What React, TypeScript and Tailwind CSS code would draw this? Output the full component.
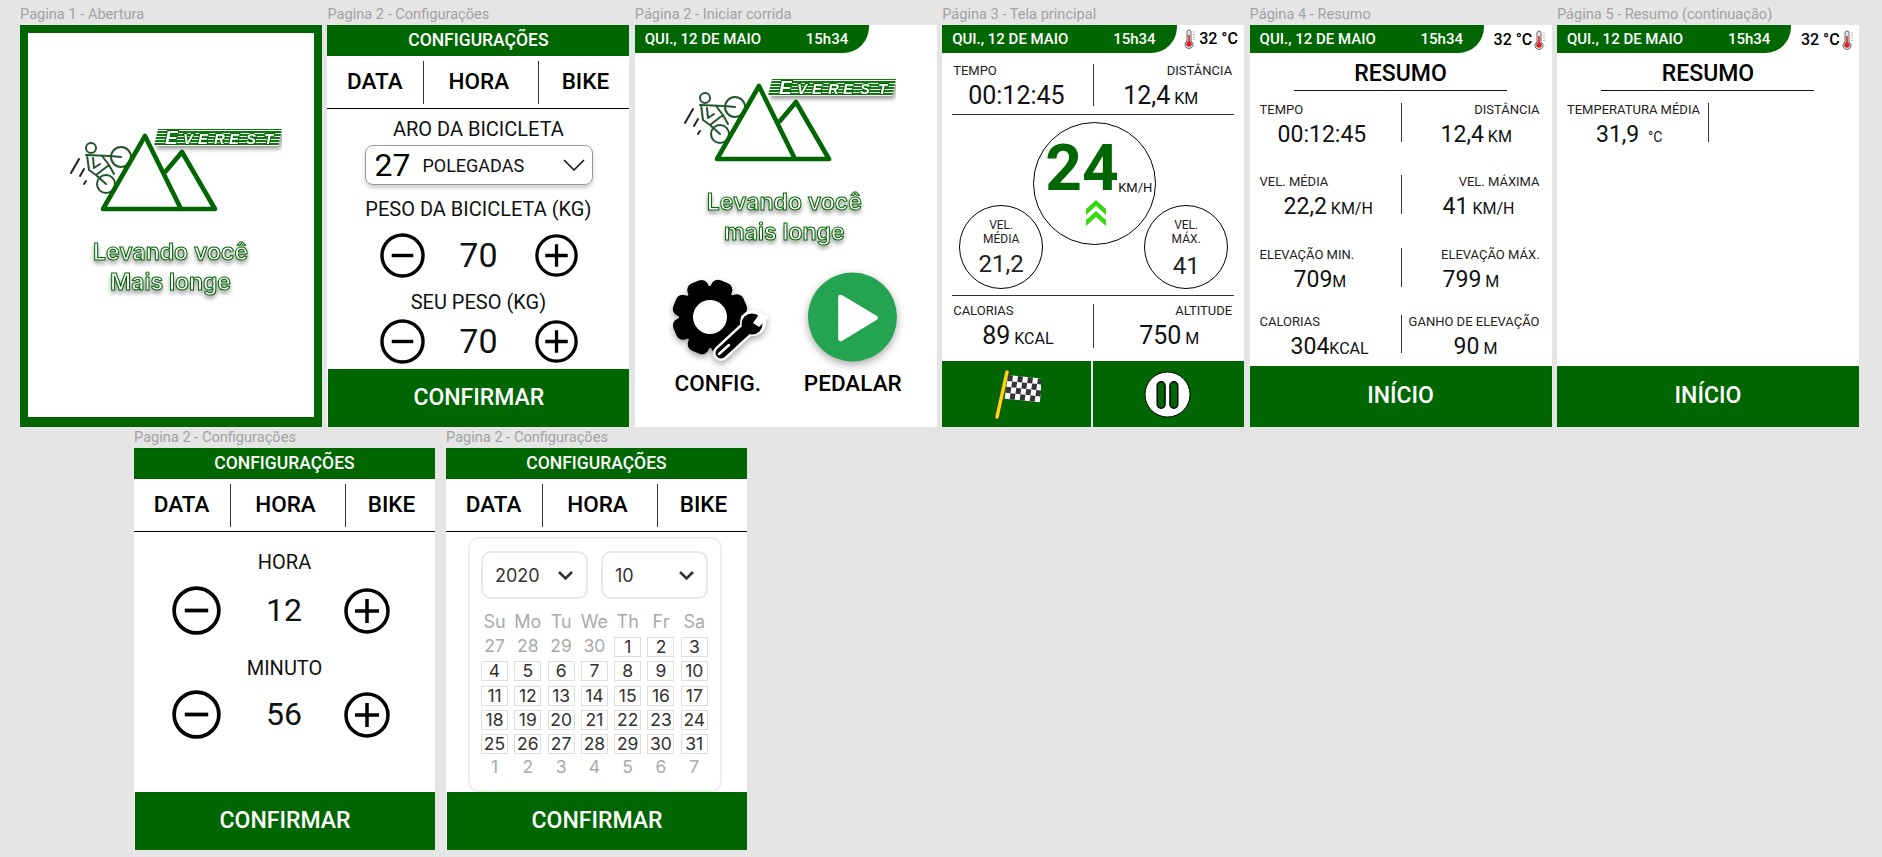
import React from "react";

const green = "#006600";

function Logo() {
  return (
    <svg viewBox="0 0 212 84" className="w-[212px] h-[84px] block">
      <defs>
        <pattern id="stripes" width="4" height="3" patternUnits="userSpaceOnUse">
          <rect width="4" height="3" fill="#ffffff" />
          <rect width="4" height="2" fill="#0a7a0a" />
        </pattern>
        <filter id="soft" x="-10%" y="-30%" width="120%" height="190%">
          <feDropShadow dx="2" dy="3" stdDeviation="2" floodColor="#000" floodOpacity="0.4" />
        </filter>
      </defs>
      <g fill="none" stroke="#25552f" strokeWidth="2" strokeLinecap="round" strokeLinejoin="round">
        <circle cx="21" cy="20" r="5" />
        <circle cx="51" cy="29" r="10" />
        <circle cx="36" cy="56" r="9" />
        <path d="M16 27 L40 28 L51 29 M17 27 L19 42 L26 47 L39 37 L32 28 M23 30 L24 40 L30 36 M26 47 L36 56 M39 37 L44 46" />
      </g>
      <g stroke="#222" strokeWidth="2" strokeLinecap="round">
        <path d="M9 31 L1 45" />
        <path d="M14 41 L10 48" />
        <path d="M16 53 L14 56" />
      </g>
      <path
        d="M33 81 L75 8 L111 81 Z M96 43 L112 24 L145 81 L111 81"
        fill="none"
        stroke={green}
        strokeWidth="4.6"
        strokeLinejoin="round"
        strokeLinecap="round"
      />
      <g filter="url(#soft)">
        <polygon points="88,1 212,1 208,18 84,18" fill="url(#stripes)" />
        <text
          x="95 113 128 144 159 176 194"
          y="15.5"
          fontFamily="Liberation Sans"
          fontWeight="700"
          fontStyle="italic"
          fontSize="15"
          fill="#fff"
          stroke={green}
          strokeWidth="2"
          paintOrder="stroke"
        >
          <tspan fontSize="19">E</tspan>VEREST
        </text>
      </g>
    </svg>
  );
}

function Tagline({ second }: { second: string }) {
  return (
    <div className="text-center [font-family:Inter,sans-serif] font-semibold text-[23px] leading-[30px] text-white [-webkit-text-stroke:1px_#006600] drop-shadow-[0_3px_2px_rgba(0,0,0,0.4)]">
      <div>Levando você</div>
      <div>{second}</div>
    </div>
  );
}

function Minus({ className }: { className: string }) {
  return (
    <svg viewBox="0 0 46 46" className={className}>
      <circle cx="23" cy="23" r="21" fill="none" stroke="#000" strokeWidth="3.5" />
      <path d="M12 23 H34" stroke="#000" strokeWidth="3.5" />
    </svg>
  );
}

function Plus({ className }: { className: string }) {
  return (
    <svg viewBox="0 0 46 46" className={className}>
      <circle cx="23" cy="23" r="21" fill="none" stroke="#000" strokeWidth="3.5" />
      <path d="M11 23 H35 M23 11 V35" stroke="#000" strokeWidth="3.5" />
    </svg>
  );
}

function ConfigHeader() {
  return (
    <>
      <div className="h-[31px] bg-[#006600] text-white text-[17.5px] font-medium flex items-center justify-center shrink-0">
        CONFIGURAÇÕES
      </div>
      <div className="h-[53px] border-b border-black flex items-center shrink-0 text-[22.5px] font-medium text-black">
        <div className="w-[96px] text-center pr-[1px]">DATA</div>
        <div className="w-[116px] h-[43px] border-x border-[#333] flex items-center justify-center pr-[5px]">HORA</div>
        <div className="flex-1 text-center pl-[2px]">BIKE</div>
      </div>
    </>
  );
}

function BottomButton({ text, className }: { text: string; className: string }) {
  return (
    <div className={`${className} mt-auto bg-[#006600] text-white text-[23px] font-medium flex items-center justify-center shrink-0`}>
      {text}
    </div>
  );
}

function DateBar({ width }: { width: string }) {
  return (
    <div className={`${width} h-[28px] bg-[#006600] rounded-br-[26px] text-white text-[15px] font-medium flex items-center pl-[10px] shrink-0`}>
      <span className="w-[161px]">QUI., 12 DE MAIO</span>
      <span>15h34</span>
    </div>
  );
}

function Thermometer() {
  return (
    <svg viewBox="0 0 12 20" className="w-[12px] h-[20px] shrink-0">
      <path d="M3 3 a2 2 0 0 1 4 0 V12 a4 4 0 1 1 -4 0 Z" fill="#e8e8e8" stroke="#666" strokeWidth="1" />
      <rect x="4.2" y="6" width="1.6" height="8" fill="#d9232e" />
      <circle cx="5" cy="15" r="2.8" fill="#d9232e" />
      <path d="M9 3 H11 M9 5.5 H11 M9 8 H11 M9 10.5 H11" stroke="#999" strokeWidth="0.7" />
    </svg>
  );
}

function Stat({
  label,
  value,
  unit,
  right,
  pad,
  size = "text-[25px]",
}: {
  label: string;
  value: string;
  unit?: string;
  right?: boolean;
  pad: string;
  size?: string;
}) {
  return (
    <div>
      <div className={`text-[13px] leading-[14px] text-[#222] ${right ? "text-right" : ""}`}>{label}</div>
      <div className={`${pad} mt-[5px] leading-[26px] whitespace-nowrap text-[#111] ${size}`}>
        {value}
        {unit && <span className="text-[16px]">{unit}</span>}
      </div>
    </div>
  );
}

function StatRow({
  left,
  right,
  className,
  inset = "pl-[10px]",
}: {
  left: React.ReactNode;
  right: React.ReactNode;
  className: string;
  inset?: string;
}) {
  return (
    <div className={`flex ${className}`}>
      <div className={`w-[152px] h-full border-r border-[#333] ${inset}`}>{left}</div>
      <div className="flex-1 pr-[12px]">{right}</div>
    </div>
  );
}

function Abertura() {
  return (
    <div className="w-[302px] h-[402px] bg-white border-x-[8px] border-t-[8px] border-b-[10px] border-[#006600]">
      <div className="ml-[42px] mt-[95px]">
        <Logo />
      </div>
      <div className="mt-[25px] mr-[1px]">
        <Tagline second="Mais longe" />
      </div>
    </div>
  );
}

function ConfigBike() {
  return (
    <div className="w-[302px] h-[402px] bg-white flex flex-col">
      <ConfigHeader />
      <div className="mt-[8px] text-center text-[20px] leading-[24px] text-[#111]">ARO DA BICICLETA</div>
      <div className="mt-[4px] ml-[38px] w-[228px] h-[40px] rounded-[8px] border border-[#999] shadow-[0_3px_4px_rgba(0,0,0,0.2)] flex items-center pl-[8px]">
        <span className="text-[32px] leading-[38px] w-[48px]">27</span>
        <span className="text-[18px] text-[#111]">POLEGADAS</span>
        <svg viewBox="0 0 22 12" className="w-[22px] h-[12px] ml-[39px]">
          <path d="M1 1 L11 11 L21 1" fill="none" stroke="#111" strokeWidth="1.5" />
        </svg>
      </div>
      <div className="mt-[12px] text-center text-[20px] leading-[24px] text-[#111]">PESO DA BICICLETA (KG)</div>
      <div className="mt-[12px] pl-[53px] flex items-center">
        <Minus className="w-[45px] h-[45px]" />
        <span className="w-[106px] text-center text-[34px] leading-[45px] text-[#111]">70</span>
        <Plus className="ml-[4px] w-[43px] h-[43px]" />
      </div>
      <div className="mt-[12px] text-center text-[20px] leading-[24px] text-[#111]">SEU PESO (KG)</div>
      <div className="mt-[5px] pl-[53px] flex items-center">
        <Minus className="w-[45px] h-[45px]" />
        <span className="w-[106px] text-center text-[34px] leading-[45px] text-[#111]">70</span>
        <Plus className="ml-[4px] w-[43px] h-[43px]" />
      </div>
      <BottomButton text="CONFIRMAR" className="h-[58px] ml-[1px]" />
    </div>
  );
}

const gearTeeth = [0, 45, 90, 135, 180, 225, 270, 315];

function GearIcon() {
  return (
    <svg viewBox="0 0 110 100" className="w-[110px] h-[100px] drop-shadow-[0_3px_3px_rgba(0,0,0,0.35)]">
      {gearTeeth.map((deg) => (
        <rect key={deg} x="36" y="14" width="22" height="18" rx="7" fill="#000" transform={`rotate(${deg + 22} 47 52)`} />
      ))}
      <circle cx="47" cy="52" r="31" fill="#000" />
      <circle cx="47" cy="52" r="17" fill="#fff" />
      <path d="M58 88 L86 62" stroke="#fff" strokeWidth="16" strokeLinecap="round" />
      <circle cx="90" cy="58" r="13" fill="#fff" />
      <path d="M58 88 L84 64" stroke="#000" strokeWidth="11" strokeLinecap="round" />
      <circle cx="89" cy="59" r="10.5" fill="#000" />
      <path d="M90 58 L97 48 L106 52 L96 62 Z" fill="#fff" />
      <path d="M56 89 L66 80" stroke="#fff" strokeWidth="2.5" strokeLinecap="round" />
    </svg>
  );
}

function IniciarCorrida() {
  return (
    <div className="w-[302px] h-[402px] bg-white flex flex-col">
      <DateBar width="w-[234px]" />
      <div className="ml-[49px] mt-[25px]">
        <Logo />
      </div>
      <div className="mt-[25px] mr-[3px]">
        <Tagline second="mais longe" />
      </div>
      <div className="mt-[18px] flex">
        <div className="w-[166px] flex flex-col items-center">
          <div className="h-[104px]">
            <GearIcon />
          </div>
          <div className="text-[22.5px] font-medium leading-[28px] text-black">CONFIG.</div>
        </div>
        <div className="w-[104px] flex flex-col items-center">
          <div className="h-[104px] pt-[7px]">
            <svg viewBox="0 0 90 90" className="w-[89px] h-[90px] drop-shadow-[0_3px_4px_rgba(0,0,0,0.35)]">
              <circle cx="45" cy="45" r="45" fill="#24A350" />
              <path d="M33 25 L68 46 L33 67 Z" fill="#fff" stroke="#fff" strokeWidth="5" strokeLinejoin="round" />
            </svg>
          </div>
          <div className="text-[22.5px] font-medium leading-[28px] text-black">PEDALAR</div>
        </div>
      </div>
    </div>
  );
}

const flagCells = Array.from({ length: 28 }, (_, i) => i);

function TelaPrincipal() {
  return (
    <div className="w-[302px] h-[402px] bg-white flex flex-col">
      <div className="flex items-center">
        <DateBar width="w-[235px]" />
        <div className="ml-[7px] mt-[-1px] flex items-center gap-[3px] text-[16px] font-medium text-black">
          <Thermometer />
          <span>32 °C</span>
        </div>
      </div>
      <StatRow
        inset="pl-[11px]"
        className="mt-[11px] h-[42px]"
        left={<Stat label="TEMPO" value="00:12:45" pad="pl-[15px]" />}
        right={<Stat right label="DISTÂNCIA" value="12,4" unit=" KM" pad="pl-[29px]" />}
      />
      <div className="mt-[8px] mx-[10px] h-[1px] bg-[#333]" />
      <div className="relative h-[180px]">
        <div className="absolute left-[91px] top-[7px] w-[123px] h-[123px] rounded-full border border-black">
          <div className="absolute left-[11px] top-[11px] text-[64px] font-bold leading-[70px] text-[#006600]">24</div>
          <div className="absolute left-[84px] top-[55px] text-[13px] text-[#111]">KM/H</div>
          <svg viewBox="0 0 20 26" className="absolute left-[52px] top-[77px] w-[20px] h-[26px]">
            <path d="M0 9 L10 0 L20 9 V15 L10 6 L0 15 Z M0 20 L10 11 L20 20 V26 L10 17 L0 26 Z" fill="#38d80f" />
          </svg>
        </div>
        <div className="absolute left-[17px] top-[90px] w-[84px] h-[84px] rounded-full border border-black bg-white flex flex-col items-center pt-[12px] text-[#222]">
          <div className="text-[12px] leading-[14px]">VEL.</div>
          <div className="text-[12px] leading-[14px]">MÉDIA</div>
          <div className="mt-[3px] text-[24px] leading-[30px]">21,2</div>
        </div>
        <div className="absolute left-[202px] top-[90px] w-[84px] h-[84px] rounded-full border border-black bg-white flex flex-col items-center pt-[12px] text-[#222]">
          <div className="text-[12px] leading-[14px]">VEL.</div>
          <div className="text-[12px] leading-[14px]">MÁX.</div>
          <div className="mt-[5px] text-[24px] leading-[30px]">41</div>
        </div>
      </div>
      <div className="mx-[10px] h-[1px] bg-[#333]" />
      <StatRow
        inset="pl-[11px]"
        className="mt-[8px] h-[44px]"
        left={<Stat label="CALORIAS" value="89" unit=" KCAL" pad="pl-[29px]" />}
        right={<Stat right label="ALTITUDE" value="750" unit=" M" pad="pl-[45px]" />}
      />
      <div className="mt-auto h-[66px] bg-[#006600] flex">
        <div className="w-[151px] border-r-2 border-[#e8e8e8] pl-[51px] pt-[9px]">
          <svg viewBox="0 0 48 50" className="w-[48px] h-[50px]">
            <path d="M14 2 L4 47" stroke="#3a3200" strokeWidth="5" strokeLinecap="round" />
            <path d="M14 2 L4 47" stroke="#f5d90a" strokeWidth="3.5" strokeLinecap="round" />
            <g transform="translate(15 5) skewY(6) skewX(-8)">
              <rect width="35" height="24" fill="#fff" />
              {flagCells
                .filter((i) => ((i % 7) + Math.floor(i / 7)) % 2 === 0)
                .map((i) => (
                  <rect key={i} x={(i % 7) * 5} y={Math.floor(i / 7) * 6} width="5" height="6" fill="#33343c" />
                ))}
            </g>
          </svg>
        </div>
        <div className="flex-1 flex items-center justify-center pr-[2px]">
          <svg viewBox="0 0 48 48" className="w-[47px] h-[47px]">
            <circle cx="24" cy="24" r="23" fill="#fff" stroke="#000" strokeWidth="1" />
            <rect x="13.5" y="11" width="8" height="27" rx="4" fill="#006600" stroke="#000" strokeWidth="1.5" />
            <rect x="26.5" y="11" width="8" height="27" rx="4" fill="#006600" stroke="#000" strokeWidth="1.5" />
          </svg>
        </div>
      </div>
    </div>
  );
}

function ResumoTop() {
  return (
    <>
      <div className="flex items-center">
        <DateBar width="w-[234px]" />
        <div className="ml-[10px] mt-[1px] flex items-center gap-[2px] text-[16px] font-medium text-black">
          <span>32 °C</span>
          <Thermometer />
        </div>
      </div>
      <div className="mt-[7px] text-center text-[23px] font-medium leading-[28px] text-black">RESUMO</div>
      <div className="mt-[2px] ml-[44px] w-[213px] h-[1px] bg-[#111]" />
    </>
  );
}

function Resumo() {
  return (
    <div className="w-[302px] h-[402px] bg-white flex flex-col">
      <ResumoTop />
      <StatRow
        className="mt-[12px] h-[39px]"
        left={<Stat label="TEMPO" value="00:12:45" size="text-[23px]" pad="pl-[18px]" />}
        right={<Stat right label="DISTÂNCIA" value="12,4" unit=" KM" size="text-[23px]" pad="pl-[39px]" />}
      />
      <StatRow
        className="mt-[33px] h-[39px]"
        left={<Stat label="VEL. MÉDIA" value="22,2" unit=" KM/H" size="text-[23px]" pad="pl-[24px]" />}
        right={<Stat right label="VEL. MÁXIMA" value="41" unit=" KM/H" size="text-[23px]" pad="pl-[41px]" />}
      />
      <StatRow
        className="mt-[34px] h-[39px]"
        left={<Stat label="ELEVAÇÃO MIN." value="709" unit="M" size="text-[23px]" pad="pl-[34px]" />}
        right={<Stat right label="ELEVAÇÃO MÁX." value="799" unit=" M" size="text-[23px]" pad="pl-[41px]" />}
      />
      <StatRow
        className="mt-[28px] h-[38px]"
        left={<Stat label="CALORIAS" value="304" unit="KCAL" size="text-[23px]" pad="pl-[31px]" />}
        right={<Stat right label="GANHO DE ELEVAÇÃO" value="90" unit=" M" size="text-[23px]" pad="pl-[52px]" />}
      />
      <BottomButton text="INÍCIO" className="h-[61px]" />
    </div>
  );
}

function ResumoContinuacao() {
  return (
    <div className="w-[302px] h-[402px] bg-white flex flex-col">
      <ResumoTop />
      <StatRow
        className="mt-[12px] h-[39px]"
        left={
          <div>
            <div className="text-[13px] leading-[14px] text-[#222]">TEMPERATURA MÉDIA</div>
            <div className="pl-[29px] mt-[5px] leading-[26px] text-[23px] text-[#111] whitespace-nowrap">
              31,9 <span className="text-[14px] ml-[3px]">°C</span>
            </div>
          </div>
        }
        right={null}
      />
      <BottomButton text="INÍCIO" className="h-[61px]" />
    </div>
  );
}

function ConfigHora() {
  return (
    <div className="w-[301px] h-[402px] bg-white flex flex-col">
      <ConfigHeader />
      <div className="mt-[18px] text-center text-[20px] leading-[24px] text-[#111]">HORA</div>
      <div className="mt-[12px] pl-[38px] flex items-center">
        <Minus className="w-[49px] h-[49px]" />
        <span className="w-[123px] pl-[3px] text-center text-[32px] leading-[49px] text-[#111]">12</span>
        <Plus className="w-[46px] h-[46px]" />
      </div>
      <div className="mt-[21px] text-center text-[20px] leading-[24px] text-[#111]">MINUTO</div>
      <div className="mt-[10px] pl-[38px] flex items-center">
        <Minus className="w-[49px] h-[49px]" />
        <span className="w-[123px] pl-[3px] text-center text-[32px] leading-[49px] text-[#111]">56</span>
        <Plus className="w-[46px] h-[46px]" />
      </div>
      <BottomButton text="CONFIRMAR" className="h-[58px] ml-[1px]" />
    </div>
  );
}

const weekDays = ["Su", "Mo", "Tu", "We", "Th", "Fr", "Sa"];
const before = [27, 28, 29, 30];
const monthDays = Array.from({ length: 31 }, (_, i) => i + 1);
const after = [1, 2, 3, 4, 5, 6, 7];

function Chevron() {
  return (
    <svg viewBox="0 0 17 11" className="w-[17px] h-[11px]">
      <path d="M2 2 L8.5 8.5 L15 2" fill="none" stroke="#333" strokeWidth="2.6" />
    </svg>
  );
}

function ConfigData() {
  return (
    <div className="w-[301px] h-[402px] bg-white flex flex-col">
      <ConfigHeader />
      <div className="mt-[5px] ml-[22px] w-[254px] h-[255px] border-2 border-[#eeeeee] rounded-[10px] px-[11px] pt-[12px] [font-family:Inter,sans-serif]">
        <div className="flex gap-[13px]">
          <div className="w-[107px] h-[48px] border-2 border-[#e8e8e8] rounded-[10px] flex items-center justify-between pl-[12px] pr-[12px] text-[18px] text-[#333]">
            2020
            <Chevron />
          </div>
          <div className="w-[107px] h-[48px] border-2 border-[#e8e8e8] rounded-[10px] flex items-center justify-between pl-[12px] pr-[11px] text-[18px] text-[#333]">
            10
            <Chevron />
          </div>
        </div>
        <div className="mt-[13px] grid grid-cols-[repeat(7,27px)] gap-x-[6.3px] text-center text-[18px] leading-[20px] text-[#aaaaaa]">
          {weekDays.map((d) => (
            <div key={d} className="whitespace-nowrap flex justify-center">
              {d}
            </div>
          ))}
        </div>
        <div className="mt-[5px] grid grid-cols-[repeat(7,27px)] auto-rows-[20px] gap-x-[6.3px] gap-y-[4.3px] text-center text-[17.5px] leading-[18px]">
          {before.map((d) => (
            <div key={`b${d}`} className="text-[#aaaaaa] whitespace-nowrap">
              {d}
            </div>
          ))}
          {monthDays.map((d) => (
            <div key={d} className="border border-[#dddddd] text-[#333] whitespace-nowrap">
              {d}
            </div>
          ))}
          {after.map((d) => (
            <div key={`a${d}`} className="text-[#aaaaaa]">
              {d}
            </div>
          ))}
        </div>
      </div>
      <BottomButton text="CONFIRMAR" className="h-[58px] ml-[1px]" />
    </div>
  );
}

function Frame({ label, children }: { label: string; children: React.ReactNode }) {
  return (
    <div className="shrink-0">
      <div className="h-[21px] leading-[21px] text-[14.6px] text-[#a3a3a3] whitespace-nowrap">{label}</div>
      {children}
    </div>
  );
}

export default function App() {
  return (
    <div className="w-[1882px] h-[857px] overflow-hidden bg-[#e5e5e5] [font-family:Roboto,sans-serif]">
      <div className="flex gap-[5.4px] pl-[20px] pt-[4px]">
        <Frame label="Pagina 1 - Abertura">
          <Abertura />
        </Frame>
        <Frame label="Pagina 2 - Configurações">
          <ConfigBike />
        </Frame>
        <Frame label="Página 2 - Iniciar corrida">
          <IniciarCorrida />
        </Frame>
        <Frame label="Página 3 - Tela principal">
          <TelaPrincipal />
        </Frame>
        <Frame label="Página 4 - Resumo">
          <Resumo />
        </Frame>
        <Frame label="Página 5 - Resumo (continuação)">
          <ResumoContinuacao />
        </Frame>
      </div>
      <div className="flex gap-[11px] pl-[134px]">
        <Frame label="Pagina 2 - Configurações">
          <ConfigHora />
        </Frame>
        <Frame label="Pagina 2 - Configurações">
          <ConfigData />
        </Frame>
      </div>
    </div>
  );
}
